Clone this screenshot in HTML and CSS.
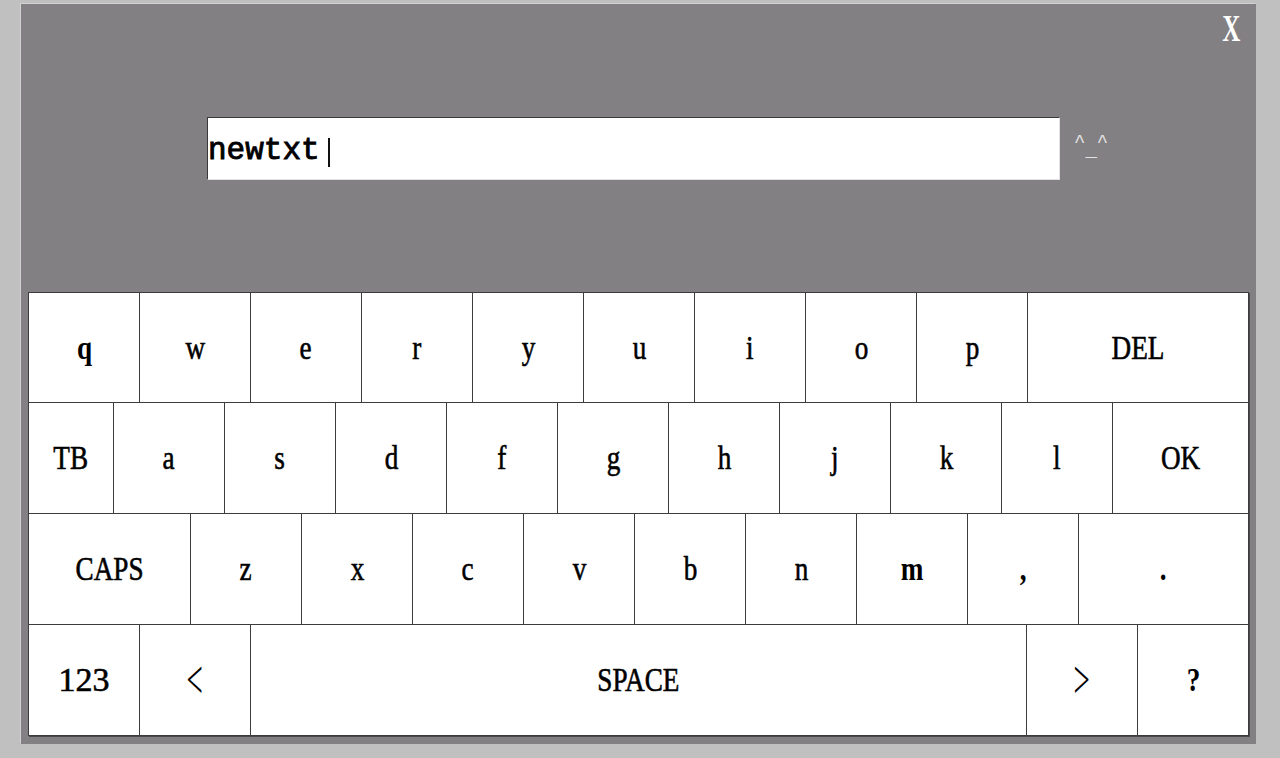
FILE: index.html
```html
<!DOCTYPE html>
<html>
<head>
<meta charset="utf-8">
<title>Keyboard</title>
<link rel="stylesheet" href="styles.css">
</head>
<body>
<div class="panel">
  <div class="header">
    <div class="close-row"><span class="close">X</span></div>
    <div class="input-row">
      <div class="field"><span class="field-text">newtxt</span><span class="caret"></span></div>
      <span class="face">^<span class="mouth">_</span>^</span>
    </div>
  </div>
  <div class="keyboard">
    <div class="row row-first">
      <div class="key"><span class="label heavy">q</span></div>
      <div class="key"><span class="label">w</span></div>
      <div class="key"><span class="label">e</span></div>
      <div class="key"><span class="label">r</span></div>
      <div class="key"><span class="label">y</span></div>
      <div class="key"><span class="label">u</span></div>
      <div class="key"><span class="label">i</span></div>
      <div class="key"><span class="label">o</span></div>
      <div class="key"><span class="label">p</span></div>
      <div class="key w221"><span class="label">DEL</span></div>
    </div>
    <div class="row">
      <div class="key w85"><span class="label">TB</span></div>
      <div class="key"><span class="label">a</span></div>
      <div class="key"><span class="label">s</span></div>
      <div class="key"><span class="label">d</span></div>
      <div class="key"><span class="label">f</span></div>
      <div class="key"><span class="label">g</span></div>
      <div class="key"><span class="label">h</span></div>
      <div class="key"><span class="label">j</span></div>
      <div class="key"><span class="label">k</span></div>
      <div class="key"><span class="label">l</span></div>
      <div class="key w136"><span class="label">OK</span></div>
    </div>
    <div class="row">
      <div class="key w162"><span class="label">CAPS</span></div>
      <div class="key"><span class="label">z</span></div>
      <div class="key"><span class="label">x</span></div>
      <div class="key"><span class="label">c</span></div>
      <div class="key"><span class="label">v</span></div>
      <div class="key"><span class="label">b</span></div>
      <div class="key"><span class="label">n</span></div>
      <div class="key"><span class="label heavy">m</span></div>
      <div class="key"><span class="label heavy">,</span></div>
      <div class="key w170"><span class="label heavy">.</span></div>
    </div>
    <div class="row">
      <div class="key"><span class="label digits">123</span></div>
      <div class="key"><span class="label thin">&lt;</span></div>
      <div class="key w776"><span class="label">SPACE</span></div>
      <div class="key"><span class="label thin">&gt;</span></div>
      <div class="key"><span class="label heavy">?</span></div>
    </div>
  </div>
</div>
</body>
</html>
```
FILE: styles.css
```css
html, body {
  margin: 0;
  padding: 0;
  height: 100%;
}

body {
  background: #c0c0c0;
  overflow: hidden;
  font-family: "Liberation Serif", serif;
}

.panel {
  margin: 4px 0 0 21px;
  width: 1235px;
  height: 740px;
  box-sizing: border-box;
  padding-left: 7px;
  background: #828082;
  box-shadow: -1px -1px 0 #d2d2d2;
  display: flex;
  flex-direction: column;
}

.header {
  height: 288px;
  flex: none;
  display: flex;
  flex-direction: column;
}

.close-row {
  height: 113px;
  box-sizing: border-box;
  padding: 5px 16px 0 0;
  display: flex;
  justify-content: flex-end;
  align-items: flex-start;
}

.close {
  display: inline-block;
  font-family: "Liberation Serif", serif;
  font-weight: bold;
  font-size: 38px;
  line-height: 38px;
  color: #ffffff;
  transform: scaleX(0.66);
  transform-origin: right center;
}

.input-row {
  display: flex;
  align-items: flex-start;
  padding-left: 179px;
}

.field {
  width: 853px;
  height: 63px;
  box-sizing: border-box;
  background: #ffffff;
  border-top: 1px solid #3a3a3a;
  border-left: 1px solid #3a3a3a;
  border-right: 1px solid #e2e2e2;
  border-bottom: 1px solid #e2e2e2;
  padding-top: 4px;
  display: flex;
  align-items: center;
}

.field-text {
  font-family: "Liberation Mono", monospace;
  font-size: 31px;
  line-height: 36px;
  color: #000;
  -webkit-text-stroke: 0.9px #000;
}

.caret {
  align-self: flex-start;
  margin-top: 16px;
  margin-left: 8px;
  width: 2px;
  height: 29px;
  background: #111;
}

.face {
  margin-left: 14px;
  margin-top: 14px;
  font-family: "Liberation Mono", monospace;
  font-size: 19px;
  line-height: 22px;
  color: #e4e4e4;
}

.mouth {
  vertical-align: -9px;
}

.keyboard {
  width: 1221px;
  box-sizing: border-box;
  border-left: 1px solid #3c3c3c;
  border-top: 1px solid #3c3c3c;
  box-shadow: 1px 1px 0 #4a4a4a;
  display: flex;
  flex-direction: column;
}

.row {
  display: flex;
  height: 111px;
}

.row-first {
  height: 110px;
}

.key {
  flex: none;
  width: 111px;
  box-sizing: border-box;
  background: #ffffff;
  border-right: 1px solid #3c3c3c;
  border-bottom: 1px solid #3c3c3c;
  display: flex;
  align-items: center;
  justify-content: center;
}

.w85 { width: 85px; }
.w136 { width: 136px; }
.w162 { width: 162px; }
.w170 { width: 170px; }
.w221 { width: 221px; }
.w776 { width: 776px; }

.label {
  display: inline-block;
  font-family: "Liberation Serif", serif;
  font-size: 34px;
  line-height: 34px;
  color: #000;
  -webkit-text-stroke: 0.6px #000;
  transform: scaleX(0.8);
}

.label.heavy {
  font-weight: bold;
  -webkit-text-stroke: 0;
}

.label.digits {
  transform: none;
}

.label.thin {
  -webkit-text-stroke: 0;
  transform: scale(0.85, 1.6);
}
```
